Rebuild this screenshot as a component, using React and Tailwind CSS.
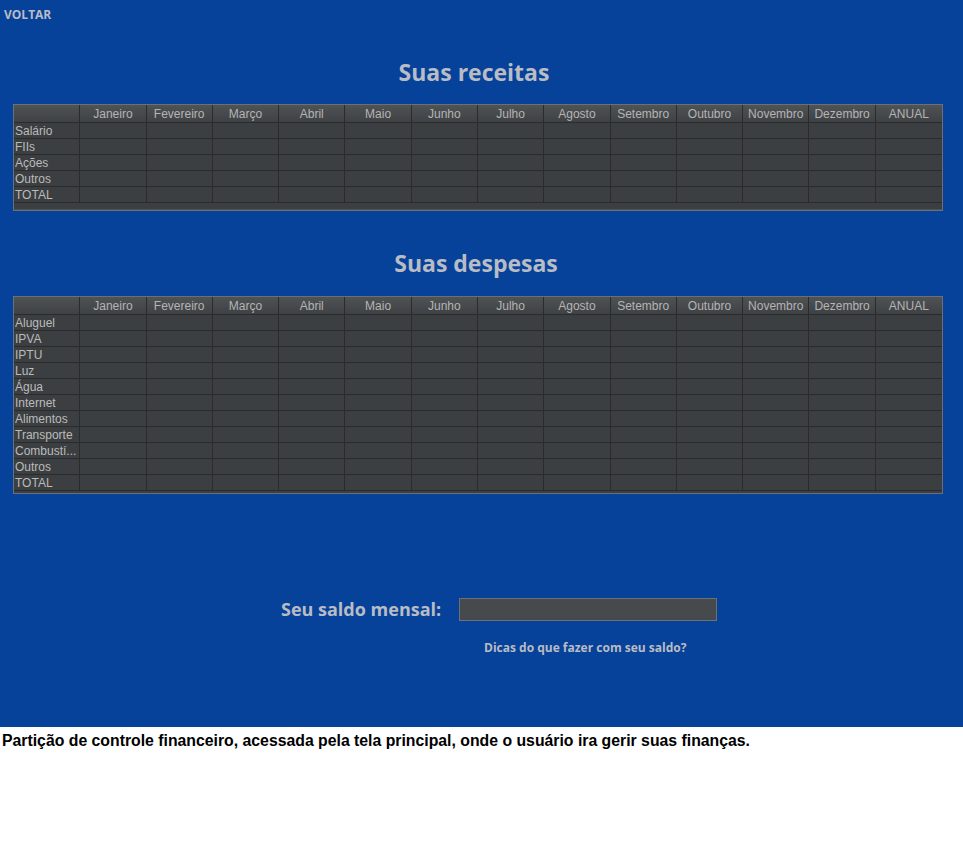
import React from "react";

const months = ["Janeiro","Fevereiro","Março","Abril","Maio","Junho","Julho","Agosto","Setembro","Outubro","Novembro","Dezembro","ANUAL"];

function Table({ rows, extra }) {
  return (
    <div className="ml-[13px] w-[930px] border border-[#6d7073] bg-[#3c3f41]">
      <div className="grid grid-cols-14 h-[18px] bg-gradient-to-b from-[#505356] to-[#3f4245] border-b border-[#2b2b2b]">
        <div className="border-r border-[#2b2b2b]" />
        {months.map((m) => (
          <div key={m} className="border-r border-[#2b2b2b] last:border-r-0 pt-[1px] text-center text-[12px] leading-[17px] text-[#b4b4b4] [font-family:'Liberation_Sans',Arial,sans-serif] whitespace-nowrap overflow-hidden">
            {m}
          </div>
        ))}
      </div>
      {rows.map((r) => (
        <div key={r} className="grid grid-cols-14 h-[16px] border-b border-[#2b2b2b]">
          <div className="border-r border-[#2b2b2b] pl-[1px] pt-[1px] text-[12px] leading-[15px] text-[#bbbbbb] [font-family:'Liberation_Sans',Arial,sans-serif] whitespace-nowrap overflow-hidden">
            {r}
          </div>
          {months.map((m) => (
            <div key={m} className="border-r border-[#2b2b2b] last:border-r-0" />
          ))}
        </div>
      ))}
      <div className={extra} />
    </div>
  );
}

export default function App() {
  const heading = "[font-family:'Open_Sans','Noto_Sans',sans-serif] font-bold text-[#b9bcc4]";
  return (
    <div className="w-[963px] h-[856px] bg-white">
      <div className="h-[727px] bg-[#06429a] flex flex-col">
        <div className={`mt-[8px] ml-[4px] h-[14px] text-[12px] leading-[14px] ${heading}`}>VOLTAR</div>
        <div className={`mt-[34px] pr-[15px] h-[32px] text-center text-[23px] leading-[32px] ${heading}`}>Suas receitas</div>
        <div className="mt-[16px]">
          <Table rows={["Salário","FIIs","Ações","Outros","TOTAL"]} extra="h-[7px] border-b border-[#4e5154]" />
        </div>
        <div className={`mt-[36px] pr-[11px] h-[32px] text-center text-[23px] leading-[32px] ${heading}`}>Suas despesas</div>
        <div className="mt-[17px]">
          <Table rows={["Aluguel","IPVA","IPTU","Luz","Água","Internet","Alimentos","Transporte","Combustí...","Outros","TOTAL"]} extra="h-[2px]" />
        </div>
        <div className="mt-[104px] ml-[281px] flex items-center h-[23px]">
          <div className={`text-[18px] leading-[23px] w-[178px] ${heading}`}>Seu saldo mensal:</div>
          <div className="w-[258px] h-[23px] bg-[#474a4c] border border-[#6c7075]" />
        </div>
        <div className={`mt-[19px] ml-[484px] text-[12px] leading-[16px] ${heading}`}>Dicas do que fazer com seu saldo?</div>
      </div>
      <div className="pl-[2px] pt-[5px] text-[15.8px] leading-[18px] font-bold text-black [font-family:'Liberation_Sans',Arial,sans-serif]">
        Partição de controle financeiro, acessada pela tela principal, onde o usuário ira gerir suas finanças.
      </div>
    </div>
  );
}
